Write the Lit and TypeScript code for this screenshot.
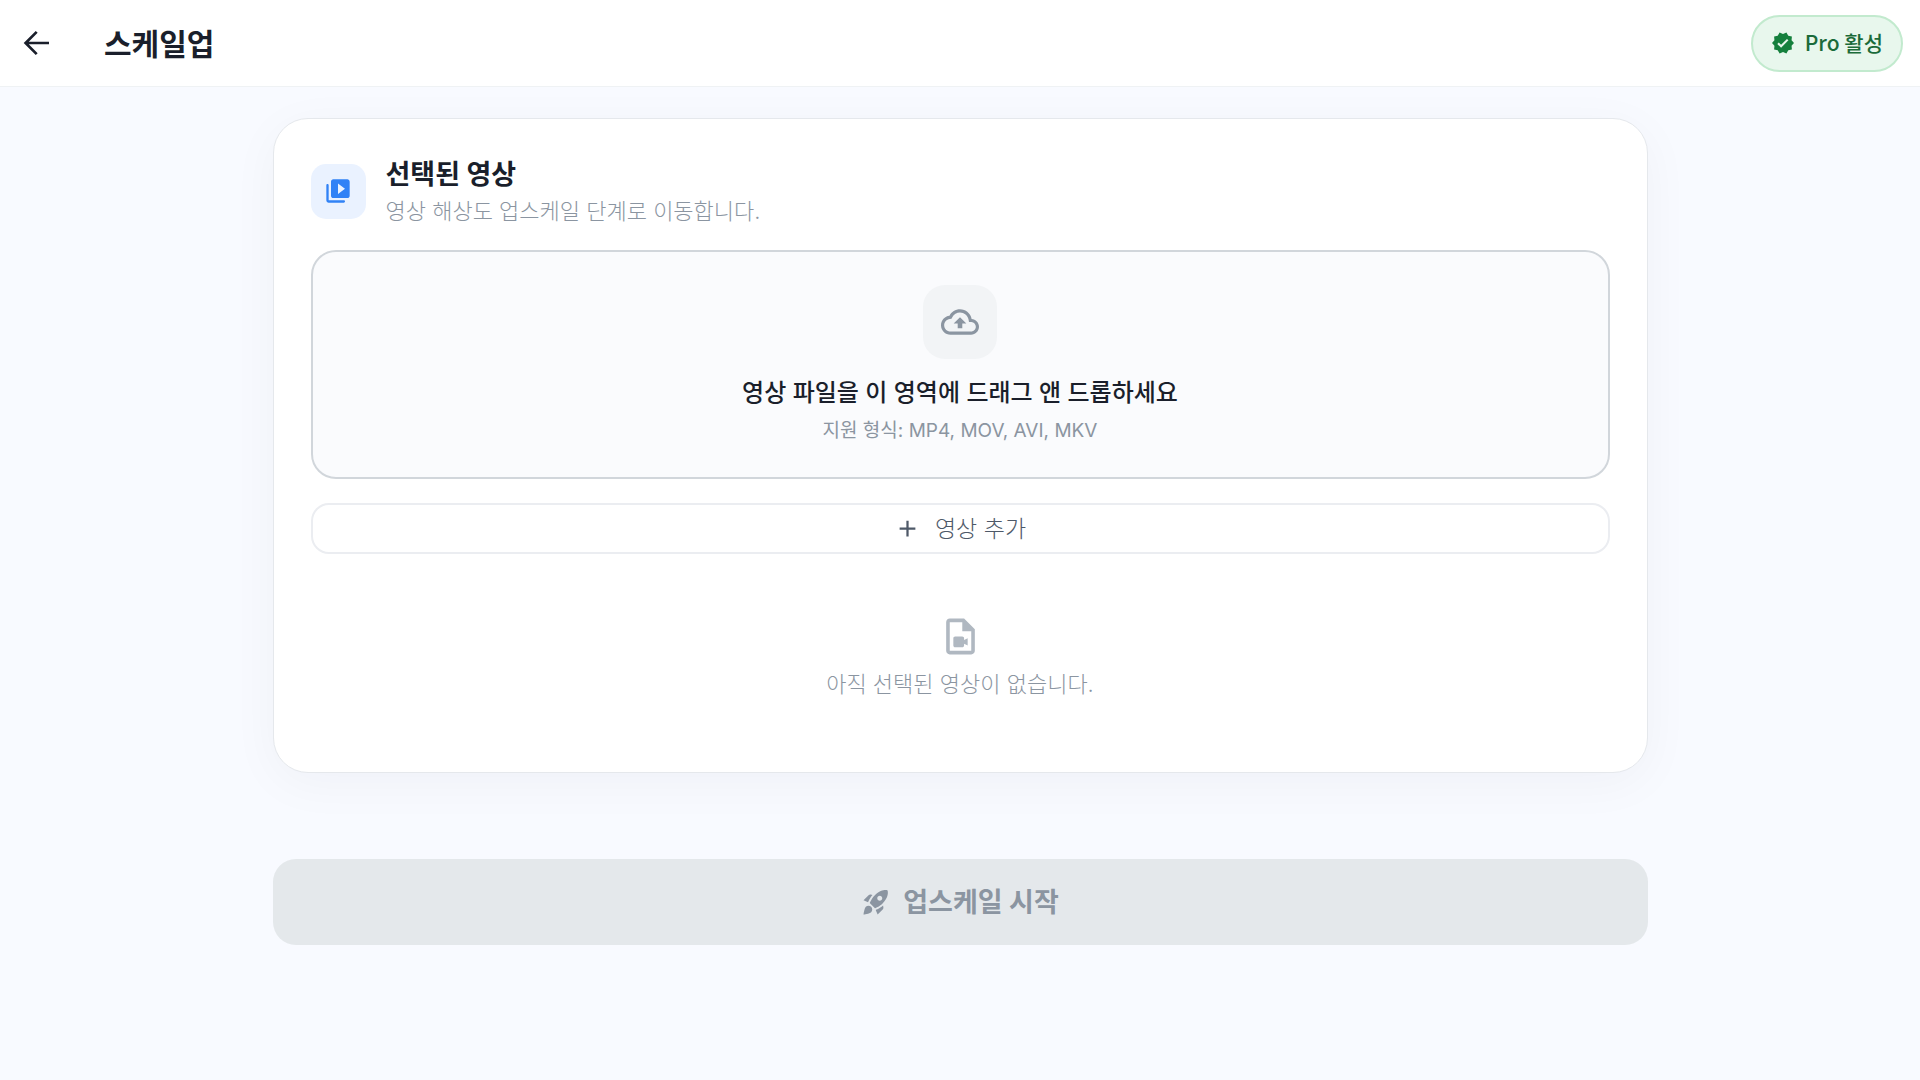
import { LitElement, html, css, svg } from "lit";
import { customElement } from "lit/decorators.js";

const icon = (name: string, body: unknown) =>
  html`<svg class="icon ${name}" viewBox="0 0 24 24" aria-hidden="true">${body}</svg>`;

const arrowBack = svg`<path d="M20 12H4.600M11.800 4.600 4.400 12l7.400 7.400" fill="none" stroke="currentColor" stroke-width="1.800"/>`;
const verified = svg`<path d="M23 12l-2.44-2.79.34-3.69-3.61-.82-1.89-3.2L12 2.96 8.6 1.5 6.71 4.69 3.1 5.5l.34 3.7L1 12l2.44 2.79-.34 3.7 3.61.82L8.6 22.5l3.4-1.47 3.4 1.46 1.89-3.19 3.61-.82-.34-3.69L23 12zm-12.91 4.72-3.8-3.81 1.48-1.48 2.32 2.33 5.85-5.87 1.48 1.48-7.33 7.35z"/>`;
const videoLibrary = svg`<path fill-rule="evenodd" d="M4 7c0-.55-.45-1-1-1s-1 .45-1 1v13c0 1.100.9 2 2 2h13c.55 0 1-.45 1-1s-.45-1-1-1H4V7zm16-5H8c-1.100 0-2 .9-2 2v12c0 1.100.9 2 2 2h12c1.100 0 2-.9 2-2V4c0-1.100-.9-2-2-2zm-8 12.500v-9l6 4.500-6 4.500z"/>`;
const cloudUpload = svg`<path d="M19.35 10.040C18.670 6.590 15.640 4 12 4 9.110 4 6.600 5.640 5.350 8.040 2.340 8.360 0 10.910 0 14c0 3.310 2.690 6 6 6h13c2.760 0 5-2.240 5-5 0-2.640-2.050-4.780-4.650-4.960zM19 18H6c-2.210 0-4-1.790-4-4 0-2.050 1.530-3.760 3.560-3.970l1.070-.11.5-.95C8.080 7.140 9.940 6 12 6c2.620 0 4.880 1.860 5.390 4.430l.3 1.500 1.530.11c1.560.1 2.780 1.410 2.780 2.960 0 1.650-1.350 3-3 3zM8 13h2.550v3h2.900v-3H16l-4-4z"/>`;
const plus = svg`<path d="M19 13h-6v6h-2v-6H5v-2h6V5h2v6h6z"/>`;
const videoFile = svg`<path fill-rule="evenodd" d="M14 2H6c-1.100 0-2 .9-2 2v16c0 1.100.9 2 2 2h12c1.100 0 2-.9 2-2V8l-6-6zM6 20V4h7v5h5v11H6zM14 14v-1c0-.55-.45-1-1-1H9c-.55 0-1 .45-1 1v4c0 .55.45 1 1 1h4c.55 0 1-.45 1-1v-1l2 1.060v-4.120L14 14z"/>`;
const rocket = svg`<path fill-rule="evenodd" d="M9.190 6.350c-2.040 2.290-3.440 5.580-3.570 5.890L2 10.690l4.050-4.050c.47-.47 1.150-.68 1.810-.55l1.330.26zM11.170 17s3.740-1.550 5.890-3.700c5.400-5.400 4.500-9.620 4.210-10.570-.95-.3-5.170-1.190-10.570 4.210C8.550 9.090 7 12.830 7 12.830L11.170 17zm6.480-2.190c-2.290 2.040-5.580 3.440-5.890 3.570L13.310 22l4.050-4.050c.47-.47.68-1.150.55-1.810l-.26-1.330zM9 18c0 .83-.34 1.580-.88 2.120C6.940 21.300 2 22 2 22s.7-4.940 1.880-6.120C4.420 15.340 5.170 15 6 15c1.660 0 3 1.340 3 3zm4-9c0-1.100.9-2 2-2s2 .9 2 2-.9 2-2 2-2-.9-2-2z"/>`;

@customElement("app-root")
export class AppRoot extends LitElement {
  static styles = css`
    :host {
      display: block;
      min-height: 100vh;
      background: #f8faff;
      color: #1a1f2b;
      font-family: Inter, "Noto Sans CJK KR", sans-serif;
    }
    * { box-sizing: border-box; }
    h1, h2, p { margin: 0; }
    button { font: inherit; cursor: pointer; }
    button:disabled { cursor: default; }
    .icon { display: block; flex: none; width: 24px; height: 24px; fill: currentColor; }
    .bar {
      display: flex;
      align-items: center;
      height: 87px;
      padding: 0 17px 0 12px;
      background: #fff;
      border-bottom: 1px solid #eff2f4;
    }
    .back {
      display: grid;
      place-items: center;
      width: 50px;
      height: 50px;
      padding: 0;
      border: 0;
      border-radius: 50%;
      background: none;
      color: #1a1f2b;
    }
    .back .icon { width: 36px; height: 36px; }
    .page-title { flex: 1; padding: 2px 0 0 42px; font-size: 30px; line-height: 40px; font-weight: 700; }
    .badge {
      display: flex;
      align-items: center;
      gap: 10px;
      height: 57px;
      padding: 0 18px;
      border: 2px solid #c2eace;
      border-radius: 29px;
      background: #e8f7ed;
      color: #1b6b3a;
      font: 500 21px/30px "Noto Sans CJK KR", sans-serif;
    }
    .badge .icon { color: #15803d; }
    .label { padding-bottom: 3px; }
    main {
      display: flex;
      flex-direction: column;
      gap: 86px;
      max-width: 1375px;
      margin: 0 auto;
      padding-top: 31px;
    }
    .card {
      padding: 34px 37px 70px;
      border: 1px solid #e5e8ec;
      border-radius: 35px;
      background: #fff;
      box-shadow: 0 10px 50px rgba(15, 23, 42, 0.04);
    }
    .card-head { display: flex; align-items: center; gap: 20px; }
    .card-text { padding-top: 4px; }
    .tile {
      display: grid;
      place-items: center;
      width: 55px;
      height: 55px;
      border-radius: 15px;
      background: #eaf2ff;
      color: #3182f6;
    }
    .tile .icon { width: 28px; height: 28px; }
    .card-title { font-size: 27px; line-height: 36px; font-weight: 700; }
    .muted { font-size: 22px; line-height: 36px; font-weight: 300; color: #8b95a1; }
    .drop {
      display: flex;
      flex-direction: column;
      align-items: center;
      margin-top: 21px;
      padding: 33px 24px 30px;
      border: 2px solid #d1d6db;
      border-radius: 25px;
      background: #fafbfd;
    }
    .cloud {
      display: grid;
      place-items: center;
      width: 74px;
      height: 74px;
      border-radius: 22px;
      background: #f2f4f6;
      color: #8b95a1;
    }
    .cloud .icon { width: 38px; height: 38px; }
    .drop-title { margin-top: 16px; font-size: 24px; line-height: 36px; font-weight: 500; }
    .formats { margin-top: 4px; font-size: 19px; line-height: 32px; color: #8b95a1; }
    .add {
      display: flex;
      align-items: center;
      justify-content: center;
      gap: 14px;
      width: 100%;
      height: 51px;
      margin-top: 24px;
      padding: 0;
      border: 2px solid #ebedf1;
      border-radius: 18px;
      background: #fff;
      color: #4e5968;
      font-size: 23px;
      font-weight: 300;
    }
    .add .icon { width: 27px; height: 27px; }
    .empty {
      display: flex;
      flex-direction: column;
      align-items: center;
      gap: 8px;
      padding-top: 61px;
    }
    .empty .icon { width: 43px; height: 43px; color: #b0b8c1; }
    .start {
      display: flex;
      align-items: center;
      justify-content: center;
      gap: 12px;
      width: 100%;
      height: 86px;
      padding: 0;
      border: 0;
      border-radius: 23px;
      background: #e4e8eb;
      color: #8b95a1;
      font-size: 27px;
      font-weight: 700;
    }
    .start .icon { width: 30px; height: 30px; }
  `;

  render() {
    return html`
      <header class="bar">
        <button class="back" type="button" aria-label="뒤로">${icon("arrow", arrowBack)}</button>
        <h1 class="page-title">스케일업</h1>
        <div class="badge">${icon("verified", verified)}<span class="label">Pro 활성</span></div>
      </header>
      <main>
        <section class="card">
          <div class="card-head">
            <div class="tile">${icon("library", videoLibrary)}</div>
            <div class="card-text">
              <h2 class="card-title">선택된 영상</h2>
              <p class="muted">영상 해상도 업스케일 단계로 이동합니다.</p>
            </div>
          </div>
          <div class="drop">
            <div class="cloud">${icon("upload", cloudUpload)}</div>
            <p class="drop-title">영상 파일을 이 영역에 드래그 앤 드롭하세요</p>
            <p class="formats">지원 형식: MP4, MOV, AVI, MKV</p>
          </div>
          <button class="add" type="button">${icon("plus", plus)}<span class="label">영상 추가</span></button>
          <div class="empty">
            ${icon("file", videoFile)}
            <p class="muted">아직 선택된 영상이 없습니다.</p>
          </div>
        </section>
        <button class="start" type="button" disabled>${icon("rocket", rocket)}<span class="label">업스케일 시작</span></button>
      </main>
    `;
  }
}
